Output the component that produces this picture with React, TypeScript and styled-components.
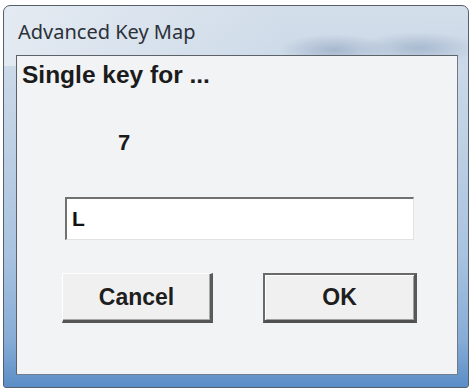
import styled, { createGlobalStyle } from "styled-components";

const Global = createGlobalStyle`
    body {
        margin: 0;
        background: #ffffff;
        font-family: "Liberation Sans", Arial, sans-serif;
    }
`;

//outer glass frame of the dialog
const Frame = styled.div`
    margin: 5px 0 0 3px;
    width: 466px;
    height: 383px;
    box-sizing: border-box;
    border: 1px solid #56606c;
    border-radius: 7px 7px 3px 3px;
    padding: 0 10px 12px 12px;
    display: flex;
    flex-direction: column;
    background:
        radial-gradient(ellipse 55px 16px at 330px 44px, rgba(140, 160, 188, 0.6), transparent),
        radial-gradient(ellipse 60px 16px at 415px 42px, rgba(140, 160, 188, 0.55), transparent),
        linear-gradient(to right, rgba(230, 236, 243, 0.85) 0%, rgba(205, 218, 232, 0.4) 60%, rgba(185, 203, 225, 0.1) 100%) top / 100% 60px no-repeat,
        linear-gradient(to bottom, #d6e0eb 0%, #c2d3e5 30%, #a9c3e0 65%, #86acd6 88%, #5b8dc6 100%);
`;

//title text on the glass
const Title = styled.div`
    height: 49px;
    box-sizing: border-box;
    padding: 12px 0 0 2px;
    font-family: "Noto Sans", "Open Sans", sans-serif;
    font-size: 20px;
    color: #2b3138;
`;

//the grey client area
const Client = styled.div`
    flex: 1;
    background: #f2f3f4;
    border: 1px solid #5d6268;
    border-right-color: #6f7b88;
    border-bottom-color: #6f7f92;
    display: flex;
    flex-direction: column;
    align-items: flex-start;
`;

const Prompt = styled.div`
    margin: 7px 0 0 5px;
    font-size: 24.5px;
    font-weight: bold;
    line-height: 24px;
    color: #1b1b1b;
`;

const KeyLabel = styled.div`
    margin: 45px 0 0 101px;
    font-size: 22px;
    font-weight: bold;
    line-height: 22px;
    color: #1b1b1b;
`;

//text box with sunken edge
const KeyInput = styled.input`
    margin: 43px 0 0 48px;
    width: 349px;
    height: 43px;
    box-sizing: border-box;
    background: #ffffff;
    border-style: solid;
    border-width: 2px 1px 1px 2px;
    border-color: #707070 #e2e2e2 #e2e2e2 #707070;
    padding: 0 0 0 5px;
    font-family: "Liberation Sans", Arial, sans-serif;
    font-size: 21px;
    font-weight: bold;
    color: #111;
    outline: none;
`;

const ButtonRow = styled.div`
    display: flex;
    gap: 50px;
    margin: 33px 0 0 45px;
`;

//raised button, default one gets the dark outline
const Button = styled.button<{primary?: boolean}>`
    height: 50px;
    width: ${(props) => props.primary ? "154px" : "151px"};
    box-sizing: border-box;
    background: #f0f0f0;
    font-family: "Liberation Sans", Arial, sans-serif;
    font-size: 23px;
    font-weight: bold;
    color: #1e1e1e;
    padding: 0;
    border-style: solid;
    border-width: ${(props) => props.primary ? "2px 3px 3px 2px" : "1px 3px 3px 1px"};
    border-color: ${(props) => props.primary
        ? "#6a6a6a #585858 #505050 #6a6a6a"
        : "#ffffff #5a5a5a #555555 #ffffff"};
    box-shadow: ${(props) => props.primary
        ? "inset 1px 1px 0 #ffffff, inset -1px -1px 0 #a0a0a0"
        : "inset -1px -1px 0 #a8a8a8"};
`;

export default function App() {
    return (
        <>
            <Global />
            <Frame>
                <Title>Advanced Key Map</Title>
                <Client>
                    <Prompt>Single key for ...</Prompt>
                    <KeyLabel>7</KeyLabel>
                    <KeyInput defaultValue="L" />
                    <ButtonRow>
                        <Button>Cancel</Button>
                        <Button primary>OK</Button>
                    </ButtonRow>
                </Client>
            </Frame>
        </>
    );
}
